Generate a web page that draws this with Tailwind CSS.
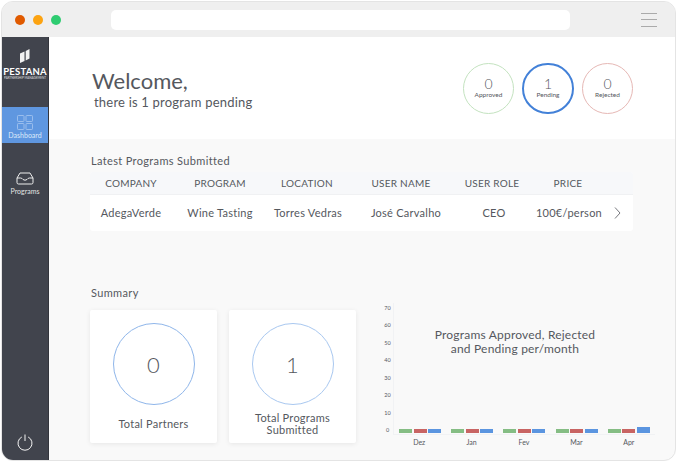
<!DOCTYPE html>
<html lang="en">
<head>
    <meta charset="UTF-8">
    <title>Pestana Dashboard</title>
    <script src="https://cdn.jsdelivr.net/npm/@tailwindcss/browser@4"></script>
</head>
<body class="bg-white w-[677px] h-[462px] overflow-hidden font-['Lato',sans-serif] text-[#55585e]">
    <div class="m-[1px] w-[675px] h-[460px] rounded-[12px] border border-[#e4e4e4] overflow-hidden flex flex-col bg-[#f9f9f9]">
        <!-- browser bar -->
        <div class="h-[35px] shrink-0 bg-[#efefef] flex items-center pl-[13px]">
            <div class="flex gap-[8px] w-[96px]">
                <span class="w-[10px] h-[10px] rounded-full bg-[#e05a00]"></span>
                <span class="w-[10px] h-[10px] rounded-full bg-[#fca311]"></span>
                <span class="w-[10px] h-[10px] rounded-full bg-[#2ecc71]"></span>
            </div>
            <div class="w-[459px] h-[20px] rounded-[5px] bg-white"></div>
            <div class="ml-[71px] w-[16px] flex flex-col gap-[5.5px]">
                <span class="h-[1px] bg-[#aaaaaa]"></span>
                <span class="h-[1px] bg-[#aaaaaa]"></span>
                <span class="h-[1px] bg-[#aaaaaa]"></span>
            </div>
        </div>
        <div class="flex flex-1 min-h-0">
            <!-- sidebar -->
            <aside class="w-[47px] shrink-0 bg-[#41444d] border-r border-[#33353c] flex flex-col items-stretch text-white">
                <div class="h-[70px] flex flex-col items-center pt-[12px]">
                    <svg width="12" height="14" viewBox="0 0 12 14" fill="#f2f2f2">
                        <path d="M1 4.5 L5.5 2.5 V12 L1 14 Z"></path>
                        <path d="M6.7 2 L10.5 0 V9.5 L6.7 11.5 Z"></path>
                    </svg>
                    <div class="font-bold text-[9.5px] leading-[11px] mt-[3px] tracking-[0.2px]">PESTANA</div>
                    <div class="text-[3px] leading-[3px] whitespace-nowrap opacity-80">PARTNERSHIP MANAGEMENT</div>
                </div>
                <div class="h-[36px] bg-[#5f97e0] flex flex-col items-center pt-[8px]">
                    <svg width="16" height="15" viewBox="0 0 16 15" fill="none" stroke="#a9c8f0" stroke-width="0.8">
                        <rect x="0.5" y="0.5" width="6.5" height="6" rx="0.8"></rect>
                        <rect x="9" y="0.5" width="6.5" height="6" rx="0.8"></rect>
                        <rect x="0.5" y="8.5" width="6.5" height="6" rx="0.8"></rect>
                        <rect x="9" y="8.5" width="6.5" height="6" rx="0.8"></rect>
                    </svg>
                    <div class="text-[7px] leading-[9px] mt-[1px] text-[#dce9fa]">Dashboard</div>
                </div>
                <div class="flex flex-col items-center mt-[29px]">
                    <svg width="18" height="13" viewBox="0 0 18 13" fill="none" stroke="#eeeeee" stroke-width="1">
                        <path d="M4 1 H14 L17 6 V10.5 A1.5 1.5 0 0 1 15.5 12 H2.5 A1.5 1.5 0 0 1 1 10.5 V6 Z"></path>
                        <path d="M1 6 H4.5 Q6 6 7 7.5 Q9 9 11 7.5 Q12 6 13.5 6 H17"></path>
                    </svg>
                    <div class="text-[7px] leading-[9px] mt-[2px] text-[#e4e4e4]">Programs</div>
                </div>
                <div class="mt-auto mb-[9px] flex justify-center">
                    <svg width="16" height="17" viewBox="0 0 16 17" fill="none" stroke="#f4f4f4" stroke-width="1">
                        <path d="M4.8 3 A7 7 0 1 0 11.2 3"></path>
                        <path d="M8 0.5 V7"></path>
                    </svg>
                </div>
            </aside>
            <main class="flex-1 min-w-0 flex flex-col">
                <!-- welcome -->
                <header class="h-[102px] shrink-0 bg-white flex items-center pl-[43px]">
                    <div class="mt-[1px]">
                        <h1 class="text-[22px] leading-[26px] font-normal text-[#55585e]">Welcome,</h1>
                        <p class="text-[13px] leading-[16px] ml-[2px] tracking-[0.2px]">there is 1 program pending</p>
                    </div>
                    <div class="ml-auto mr-[42px] flex gap-[8px]">
                        <div class="w-[51px] h-[51px] rounded-full border border-[#c3e2bf] flex flex-col items-center justify-center">
                            <span class="text-[14px] leading-[13px] font-light">0</span>
                            <span class="text-[6.5px] leading-[9px]">Approved</span>
                        </div>
                        <div class="w-[52px] h-[51px] rounded-full border-2 border-[#4381d8] flex flex-col items-center justify-center">
                            <span class="text-[14px] leading-[13px] font-light">1</span>
                            <span class="text-[6.5px] leading-[9px]">Pending</span>
                        </div>
                        <div class="w-[51px] h-[51px] rounded-full border border-[#e6b8b5] flex flex-col items-center justify-center">
                            <span class="text-[14px] leading-[13px] font-light">0</span>
                            <span class="text-[6.5px] leading-[9px]">Rejected</span>
                        </div>
                    </div>
                </header>
                <div class="flex-1 pl-[41px] pt-[15px]">
                    <h2 class="text-[11px] leading-[14px] ml-[1px] font-normal tracking-[0.35px]">Latest Programs Submitted</h2>
                    <div class="w-[543px] mt-[4px] bg-white rounded-[3px] overflow-hidden text-center">
                        <div class="h-[23px] bg-[#f7f8fa] border-b border-[#f0f1f3] grid grid-cols-[82px_96px_78px_110px_72px_80px_25px] items-center text-[10px] tracking-[0.25px]">
                            <span>COMPANY</span><span>PROGRAM</span><span>LOCATION</span><span>USER NAME</span><span>USER ROLE</span><span>PRICE</span><span></span>
                        </div>
                        <div class="h-[36px] grid grid-cols-[82px_96px_80px_116px_60px_90px_19px] items-center text-[11px] tracking-[0.25px]">
                            <span>AdegaVerde</span><span>Wine Tasting</span><span>Torres Vedras</span><span>José Carvalho</span><span>CEO</span><span>100€/person</span>
                            <svg width="7" height="12" viewBox="0 0 7 12" fill="none" stroke="#77797e" stroke-width="1"><path d="M1 0.5 L6 6 L1 11.5"></path></svg>
                        </div>
                    </div>
                    <h2 class="text-[11px] leading-[14px] ml-[1px] mt-[55px] font-normal tracking-[0.35px]">Summary</h2>
                    <div class="flex mt-[10px]">
                        <div class="w-[127px] h-[133px] bg-white rounded-[2px] shadow-[0_1px_5px_rgba(0,0,0,0.08)] flex flex-col items-center pt-[13px]">
                            <div class="w-[82px] h-[82px] rounded-full border border-[#8fb6ea] flex items-center justify-center text-[22px] font-light">0</div>
                            <div class="h-[38px] flex items-center text-[11px] leading-[12px] text-center tracking-[0.25px]">Total Partners</div>
                        </div>
                        <div class="ml-[12px] w-[127px] h-[133px] bg-white rounded-[2px] shadow-[0_1px_5px_rgba(0,0,0,0.08)] flex flex-col items-center pt-[13px]">
                            <div class="w-[82px] h-[82px] rounded-full border border-[#a9c8f0] flex items-center justify-center text-[22px] font-light">1</div>
                            <div class="h-[38px] flex items-center text-[11px] leading-[12px] text-center tracking-[0.25px]">Total Programs<br>Submitted</div>
                        </div>
                        <!-- chart -->
                        <div class="ml-[26px] -mt-[7px] flex relative h-[146px]">
                            <div class="w-[11px] h-[132px] pt-[1px] flex flex-col justify-between text-[5.5px] leading-[8px] text-center pb-[1px]">
                                <span>70</span><span>60</span><span>50</span><span>40</span><span>30</span><span>20</span><span>10</span><span>0</span>
                            </div>
                            <div class="w-[262px]">
                                <div class="h-[132px] border-l border-b border-[#f1f2f4] grid grid-cols-5 items-end">
                                    <div class="flex justify-center gap-[1.5px] pb-[1px]"><span class="w-[13px] h-[4px] bg-[#85bd84]"></span><span class="w-[13px] h-[4px] bg-[#c86463]"></span><span class="w-[13px] h-[4px] bg-[#5b95e0]"></span></div>
                                    <div class="flex justify-center gap-[1.5px] pb-[1px]"><span class="w-[13px] h-[4px] bg-[#85bd84]"></span><span class="w-[13px] h-[4px] bg-[#c86463]"></span><span class="w-[13px] h-[4px] bg-[#5b95e0]"></span></div>
                                    <div class="flex justify-center gap-[1.5px] pb-[1px]"><span class="w-[13px] h-[4px] bg-[#85bd84]"></span><span class="w-[13px] h-[4px] bg-[#c86463]"></span><span class="w-[13px] h-[4px] bg-[#5b95e0]"></span></div>
                                    <div class="flex justify-center gap-[1.5px] pb-[1px]"><span class="w-[13px] h-[4px] bg-[#85bd84]"></span><span class="w-[13px] h-[4px] bg-[#c86463]"></span><span class="w-[13px] h-[4px] bg-[#5b95e0]"></span></div>
                                    <div class="flex justify-center items-end gap-[1.5px] pb-[1px]"><span class="w-[13px] h-[4px] bg-[#85bd84]"></span><span class="w-[13px] h-[4px] bg-[#c86463]"></span><span class="w-[13px] h-[6px] bg-[#5b95e0]"></span></div>
                                </div>
                                <div class="grid grid-cols-5 text-center text-[7px] leading-[14px]">
                                    <span>Dez</span><span>Jan</span><span>Fev</span><span>Mar</span><span>Apr</span>
                                </div>
                            </div>
                            <div class="absolute left-[38px] top-[25px] w-[190px] text-center text-[12px] leading-[13.5px] tracking-[0.2px]">Programs Approved, Rejected<br>and Pending per/month</div>
                        </div>
                    </div>
                </div>
            </main>
        </div>
    </div>
</body>
</html>
